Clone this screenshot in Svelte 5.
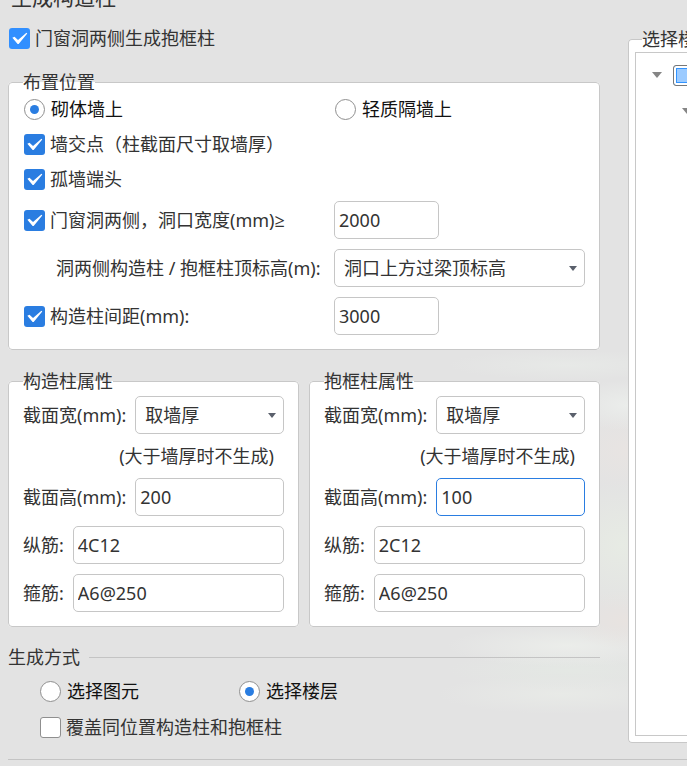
<script>
  let frameColumns = true;
  let wallType = 'masonry';
  let crossPoint = true;
  let wallEnd = true;
  let opening = true;
  let openingWidth = '2000';
  let topLevel = '洞口上方过梁顶标高';
  let spacing = true;
  let spacingValue = '3000';
  let mode = 'floor';
  let overwrite = false;

  let groups = [
    { id: 'gz', title: '构造柱属性', width: '取墙厚', height: '200', main: '4C12', stirrup: 'A6@250' },
    { id: 'bk', title: '抱框柱属性', width: '取墙厚', height: '100', main: '2C12', stirrup: 'A6@250', active: true }
  ];
</script>

<div class="dialog">
  <h1>生成构造柱</h1>

  <div class="columns">
    <main>
      <label class="check top">
        <input type="checkbox" bind:checked={frameColumns} />门窗洞两侧生成抱框柱
      </label>

      <fieldset class="panel">
        <legend>布置位置</legend>
        <div class="options">
          <div class="pair">
            <label class="check radio"><input type="radio" value="masonry" bind:group={wallType} />砌体墙上</label>
            <label class="check radio"><input type="radio" value="light" bind:group={wallType} />轻质隔墙上</label>
          </div>
          <label class="check"><input type="checkbox" bind:checked={crossPoint} />墙交点（柱截面尺寸取墙厚）</label>
          <label class="check"><input type="checkbox" bind:checked={wallEnd} />孤墙端头</label>
        </div>
        <div class="pair">
          <label class="check"><input type="checkbox" bind:checked={opening} />门窗洞两侧，洞口宽度(mm)≥</label>
          <input class="text short" type="text" aria-label="洞口宽度" bind:value={openingWidth} />
        </div>
        <div class="pair">
          <label class="indent" for="top-level">洞两侧构造柱 / 抱框柱顶标高(m):</label>
          <div class="select">
            <select id="top-level" bind:value={topLevel}>
              <option>洞口上方过梁顶标高</option>
            </select>
            <svg viewBox="0 0 8 5"><path d="M0 0h8L4 5z" /></svg>
          </div>
        </div>
        <div class="pair">
          <label class="check"><input type="checkbox" bind:checked={spacing} />构造柱间距(mm):</label>
          <input class="text short" type="text" aria-label="构造柱间距" bind:value={spacingValue} />
        </div>
      </fieldset>

      <div class="groups">
        {#each groups as group}
          <fieldset class="panel">
            <legend>{group.title}</legend>
            <div class="field">
              <label for="{group.id}-width">截面宽(mm):</label>
              <div class="select">
                <select id="{group.id}-width" bind:value={group.width}>
                  <option>取墙厚</option>
                </select>
                <svg viewBox="0 0 8 5"><path d="M0 0h8L4 5z" /></svg>
              </div>
            </div>
            <p>(大于墙厚时不生成)</p>
            <div class="field">
              <label for="{group.id}-height">截面高(mm):</label>
              <input class="text" class:active={group.active} id="{group.id}-height" type="text" bind:value={group.height} />
            </div>
            <div class="field">
              <label for="{group.id}-main">纵筋:</label>
              <input class="text" id="{group.id}-main" type="text" bind:value={group.main} />
            </div>
            <div class="field">
              <label for="{group.id}-stirrup">箍筋:</label>
              <input class="text" id="{group.id}-stirrup" type="text" bind:value={group.stirrup} />
            </div>
          </fieldset>
        {/each}
      </div>

      <fieldset class="mode">
        <legend>生成方式</legend>
        <div class="modes">
          <label class="check radio"><input type="radio" value="element" bind:group={mode} />选择图元</label>
          <label class="check radio"><input type="radio" value="floor" bind:group={mode} />选择楼层</label>
        </div>
        <label class="check"><input type="checkbox" bind:checked={overwrite} />覆盖同位置构造柱和抱框柱</label>
      </fieldset>
    </main>

    <fieldset class="panel floors">
      <legend>选择楼层</legend>
      <div class="tree">
        <div class="node">
          <svg viewBox="0 0 10 6"><path d="M0 0h10L5 6z" /></svg>
          <input type="checkbox" class="partial" aria-label="全部楼层" />
        </div>
        <div class="node child">
          <svg viewBox="0 0 10 6"><path d="M0 0h10L5 6z" /></svg>
        </div>
      </div>
    </fieldset>
  </div>

  <hr />
</div>

<style>
  :global(body) {
    background: #e3e3e3;
  }

  .dialog {
    box-sizing: border-box;
    min-height: 100vh;
    padding-left: 8px;
    overflow: hidden;
    color: #333;
    font: 18px/24px "Noto Sans", "Open Sans", "Noto Sans CJK SC", sans-serif;
    background:
      radial-gradient(closest-side, #e7e9e7, transparent) 100% 350px / 240px 30px no-repeat,
      radial-gradient(closest-side, #ebedeb, transparent) 100% 380px / 120px 50px no-repeat,
      radial-gradient(closest-side, #e8e4e2, transparent) 100% 410px / 120px 80px no-repeat,
      radial-gradient(closest-side, #e7ebe4, transparent) 100% 480px / 130px 130px no-repeat,
      radial-gradient(closest-side, #e8e3e0, transparent) 100% 590px / 120px 60px no-repeat,
      radial-gradient(closest-side, #ebedea, transparent) 100% 625px / 240px 42px no-repeat,
      radial-gradient(closest-side, #e4e8e4, transparent) 100% 650px / 240px 40px no-repeat,
      radial-gradient(closest-side, #e8eae7, transparent) 100% 674px / 250px 40px no-repeat,
      #e3e3e3;
  }

  h1 {
    margin: -17px 0 15px 3px;
    font-size: 21px;
    font-weight: 400;
    line-height: 28px;
  }

  .columns {
    display: grid;
    grid-template-columns: minmax(0, 1fr) 59px;
    gap: 28px;
  }

  fieldset {
    min-width: 0;
    margin: 0;
    padding: 0;
    border: 0;
  }

  legend {
    padding: 0;
    line-height: 20px;
    white-space: nowrap;
  }

  .panel {
    display: flex;
    flex-direction: column;
    gap: 10px;
    padding: 5px 14px 14px;
    border: 1px solid #c8c8c8;
    border-radius: 4px;
    background: #fff;
  }

  .options {
    display: flex;
    flex-direction: column;
    gap: 11px;
  }

  .pair {
    display: grid;
    grid-template-columns: 311px minmax(0, 1fr);
    align-items: center;
  }

  .check {
    display: flex;
    align-items: center;
    gap: 5px;
    padding-left: 1px;
    white-space: nowrap;
  }

  .top {
    margin-bottom: 22px;
  }

  .radio {
    gap: 6px;
    color: #111;
  }

  .indent {
    padding-left: 33px;
    white-space: nowrap;
  }

  input,
  select {
    box-sizing: border-box;
    margin: 0;
    color: inherit;
    font: inherit;
    appearance: none;
  }

  input[type='checkbox'],
  input[type='radio'] {
    flex: none;
    display: grid;
    place-items: center;
    width: 21px;
    height: 21px;
    border: 1px solid #8f8f8f;
    border-radius: 3px;
    background: #fff;
  }

  input[type='radio'] {
    border-radius: 50%;
  }

  input[type='radio']:checked::before {
    content: '';
    width: 9px;
    height: 9px;
    border-radius: 50%;
    background: #2a7de1;
  }

  input[type='checkbox']:checked {
    border: 0;
    background: #2a7de1;
  }

  .top input[type='checkbox']:checked {
    background: #318fff;
  }

  input[type='checkbox']:checked::before {
    content: '';
    width: 21px;
    height: 21px;
    background: #fff;
    clip-path: polygon(16% 49%, 26% 44%, 43% 60%, 83% 25%, 87% 29%, 46% 79%, 41% 79%);
  }

  .text,
  select {
    width: 100%;
    min-width: 0;
    height: 38px;
    padding: 0 4px;
    border: 1px solid #c6c6c6;
    border-radius: 5px;
    background: #fff;
    outline: none;
  }

  .short {
    width: 105px;
  }

  .active {
    border-color: #2a7de1;
  }

  .select {
    position: relative;
    flex: 1;
    min-width: 0;
  }

  select {
    display: block;
    padding: 0 24px 0 9px;
  }

  .select svg {
    position: absolute;
    top: 17px;
    right: 8px;
    width: 8px;
    height: 5px;
    fill: #5a606c;
    pointer-events: none;
  }

  .groups {
    display: grid;
    grid-template-columns: 1fr 1fr;
    gap: 10px;
    margin: 21px 0 20px;
  }

  .field {
    display: flex;
    align-items: center;
    gap: 9px;
  }

  .field label {
    white-space: nowrap;
  }

  p {
    margin: 0;
    padding-right: 10px;
    text-align: right;
  }

  .mode {
    padding-bottom: 4px;
    border-top: 1px solid #c4c4c4;
  }

  .mode legend {
    padding-right: 9px;
  }

  .mode .check {
    margin-left: 31px;
  }

  .modes {
    display: grid;
    grid-template-columns: 199px 1fr;
    margin: 12px 0;
  }

  .floors {
    margin-top: 3px;
    padding: 3px 0 6px 6px;
    border-right: 0;
    border-radius: 4px 0 0 4px;
  }

  .floors legend {
    margin-left: 7px;
  }

  .tree {
    flex: 1;
    box-sizing: border-box;
    padding: 4px 0 0 16px;
    border: 1px solid #c8c8c8;
    border-right: 0;
    overflow: hidden;
  }

  .node {
    display: flex;
    align-items: center;
    gap: 11px;
    height: 36px;
  }

  .child {
    padding-left: 30px;
  }

  .node svg {
    flex: none;
    width: 10px;
    height: 6px;
    fill: #858585;
  }

  .node .partial {
    border-color: #777;
    background: #9ccbff;
    box-shadow: inset 0 0 0 2px #fff, inset 0 0 0 3px #3294ff;
  }

  hr {
    margin: 16px 0 6px;
    border: 0;
    border-top: 1px solid #c4c4c4;
  }
</style>
